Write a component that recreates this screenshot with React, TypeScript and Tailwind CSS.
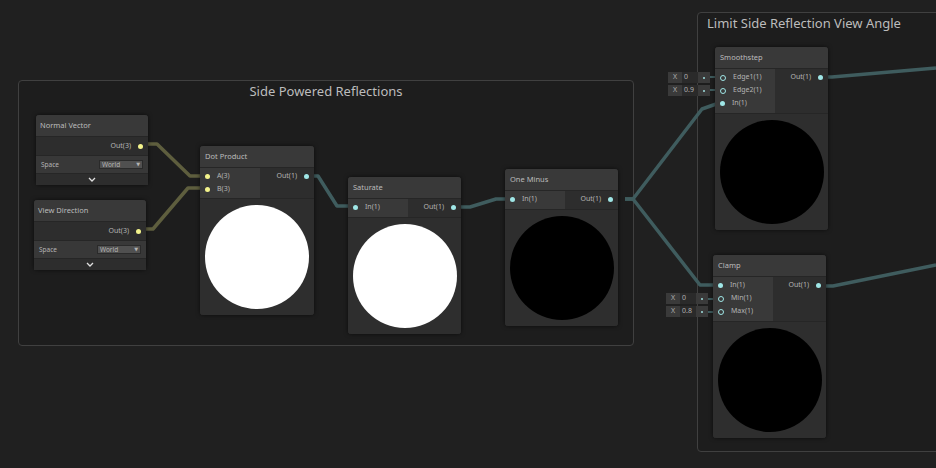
import React from "react";

const F = { fontFamily: '"Noto Sans", "DejaVu Sans", sans-serif' };

function Port({ label, color, hollow, right }: { label: string; color: string; hollow?: boolean; right?: boolean }) {
  const dot = hollow ? (
    <span className="w-[6px] h-[6px] rounded-full border-[1.5px]" style={{ borderColor: color }} />
  ) : (
    <span className="w-[5px] h-[5px] rounded-full" style={{ background: color }} />
  );
  return (
    <div className={`flex items-center gap-[7px] h-[13px] text-[7px] text-[#b4b4b4] ${right ? "justify-end" : ""}`}>
      {right ? <>{label}{dot}</> : <>{dot}{label}</>}
    </div>
  );
}

function Field({ v }: { v: string }) {
  return (
    <div className="flex items-center h-[11px] text-[7px] text-[#b0b0b0]">
      <span className="w-[14px] h-full bg-[#3a3a3a] flex items-center justify-center">X</span>
      <span className="w-[16px] h-full bg-[#2a2a2a] pl-[2px] flex items-center">{v}</span>
      <span className="w-[12px] h-full bg-[#3a3a3a] flex items-center justify-center">
        <span className="w-[2px] h-[2px] rounded-full bg-[#9fe0e0]" />
      </span>
    </div>
  );
}

function Node({ cls, title, ins, outs, portsH, circle, fields, fieldSkip }: any) {
  return (
    <div className={`absolute rounded-[3px] bg-[#2e2e2e] shadow-[0_0_4px_rgba(0,0,0,0.6)] overflow-visible ${cls}`}>
      <div className="h-[21px] bg-[#393939] rounded-t-[3px] px-[5px] flex items-center text-[7.5px] text-[#bcbcbc]">{title}</div>
      <div className="flex border-t border-[#262626]" style={{ height: portsH }}>
        <div className="w-[53%] bg-[#393939] pl-[5px] pt-[2px] relative">
          {ins.map((p: any, i: number) => <Port key={i} {...p} />)}
          {fields && (
            <div className="absolute right-full top-[2px] mr-[5px] flex flex-col">
              {fieldSkip ? <div className="h-[13px]" /> : null}
              {fields.map((f: string, i: number) => (
                <div key={i} className="h-[13px] flex items-center"><Field v={f} /></div>
              ))}
            </div>
          )}
        </div>
        <div className="flex-1 bg-[#2d2d2d] pr-[5px] pt-[2px]">
          {outs.map((p: any, i: number) => <Port key={i} {...p} right />)}
        </div>
      </div>
      <div className="border-t border-[#262626] flex items-center justify-center py-[6px] bg-[#2e2e2e] rounded-b-[3px]">
        <div className={`w-[104px] h-[104px] rounded-full ${circle === "w" ? "bg-white" : "bg-black"}`} />
      </div>
    </div>
  );
}

function InputNode({ cls, title }: { cls: string; title: string }) {
  return (
    <div className={`absolute w-[112px] rounded-[3px] bg-[#2e2e2e] shadow-[0_0_4px_rgba(0,0,0,0.6)] ${cls}`}>
      <div className="h-[21px] bg-[#393939] rounded-t-[3px] px-[4px] flex items-center text-[7.5px] text-[#bcbcbc]">{title}</div>
      <div className="h-[19px] bg-[#2d2d2d] border-t border-[#262626] pr-[5px] flex items-center justify-end">
        <Port label="Out(3)" color="#f4f48c" right />
      </div>
      <div className="h-[18px] bg-[#383838] border-t border-[#262626] px-[5px] flex items-center justify-between text-[6.5px] text-[#b4b4b4]">
        <span>Space</span>
        <span className="w-[44px] h-[9px] bg-[#505050] border border-[#2a2a2a] flex items-center justify-between px-[2px]">
          World<span className="text-[5px]">▼</span>
        </span>
      </div>
      <div className="h-[12px] bg-[#2d2d2d] border-t border-[#262626] flex items-center justify-center">
        <svg width="8" height="5" viewBox="0 0 8 5"><path d="M1 1 L4 4 L7 1" stroke="#e0e0e0" strokeWidth="1.3" fill="none" /></svg>
      </div>
    </div>
  );
}

const C = "#9fe6e6";

export default function App() {
  return (
    <div className="relative w-[936px] h-[468px] bg-[#202020] overflow-hidden" style={F}>
      <div className="absolute left-[18px] top-[80px] w-[616px] h-[266px] rounded-[4px] border border-[#404040] bg-[#1d1d1d]">
        <div className="text-center text-[13px] text-[#bcbcbc] pt-[1px]">Side Powered Reflections</div>
      </div>
      <div className="absolute left-[697px] top-[12px] w-[260px] h-[440px] rounded-[4px] border border-[#404040] bg-[#1d1d1d]">
        <div className="pl-[9px] text-[13px] text-[#bcbcbc] pt-[1px]">Limit Side Reflection View Angle</div>
      </div>

      <svg className="absolute inset-0" width="936" height="468" fill="none" strokeLinejoin="round">
        <g stroke="#5e5e3e" strokeWidth="3.5">
          <path d="M144 144 L157 144 L190 176 L204 176" />
          <path d="M142 229 L153 229 L188 188 L204 188" />
        </g>
        <g stroke="#3f5c5e" strokeWidth="3.5">
          <path d="M309 176 L318 176 L337 206 L352 206" />
          <path d="M457 207 L470 207 L496 199 L510 199" />
          <path d="M625 199 L633 199 L702 109 L719 103" />
          <path d="M625 199 L633 199 L700 285 L718 285" />
          <path d="M822 77 L832 77 L936 68" />
          <path d="M820 286 L833 286 L936 265" />
          <path d="M708 77 L719 77 M708 90 L719 90 M706 299 L717 299 M706 312 L717 312" strokeWidth="2" />
        </g>
      </svg>

      <InputNode cls="left-[36px] top-[115px]" title="Normal Vector" />
      <InputNode cls="left-[34px] top-[200px]" title="View Direction" />

      <Node cls="left-[200px] top-[146px] w-[114px]" title="Dot Product" portsH={31}
        ins={[{ label: "A(3)", color: "#f4f48c" }, { label: "B(3)", color: "#f4f48c" }]}
        outs={[{ label: "Out(1)", color: C }]} circle="w" />
      <Node cls="left-[348px] top-[177px] w-[113px]" title="Saturate" portsH={19}
        ins={[{ label: "In(1)", color: C }]} outs={[{ label: "Out(1)", color: C }]} circle="w" />
      <Node cls="left-[505px] top-[169px] w-[113px]" title="One Minus" portsH={19}
        ins={[{ label: "In(1)", color: C }]} outs={[{ label: "Out(1)", color: C }]} circle="b" />
      <Node cls="left-[715px] top-[47px] w-[113px]" title="Smoothstep" portsH={45}
        ins={[{ label: "Edge1(1)", color: C, hollow: true }, { label: "Edge2(1)", color: C, hollow: true }, { label: "In(1)", color: C }]}
        outs={[{ label: "Out(1)", color: C }]} circle="b" fields={["0", "0.9"]} />
      <Node cls="left-[713px] top-[255px] w-[113px]" title="Clamp" portsH={45}
        ins={[{ label: "In(1)", color: C }, { label: "Min(1)", color: C, hollow: true }, { label: "Max(1)", color: C, hollow: true }]}
        outs={[{ label: "Out(1)", color: C }]} circle="b" fields={["0", "0.8"]} fieldSkip />
    </div>
  );
}
